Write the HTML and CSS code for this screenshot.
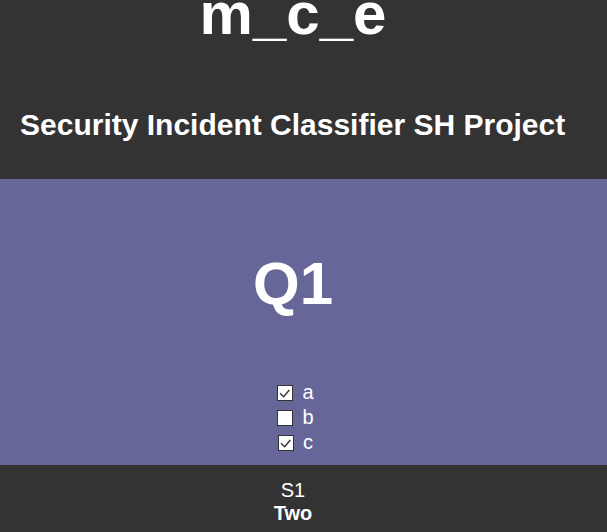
FILE: index.html
```html
<!DOCTYPE html>
<html>
<head>
<meta charset="utf-8">
<title>m_c_e</title>
<link rel="stylesheet" href="styles.css">
</head>
<body>
<header class="top">
  <h1 class="brand">m_c_e</h1>
  <h2 class="title">Security Incident Classifier SH Project</h2>
</header>
<main class="question">
  <h2 class="qname">Q1</h2>
  <div class="options">
    <div class="opt">
      <span class="box"><svg viewBox="0 0 16 16" width="16" height="16"><path d="M3 8.3 L6.7 11.7 L12.3 5" fill="none" stroke="#333" stroke-width="1.4"/></svg></span>
      <span class="lbl">a</span>
    </div>
    <div class="opt">
      <span class="box"></span>
      <span class="lbl">b</span>
    </div>
    <div class="opt">
      <span class="box"><svg viewBox="0 0 16 16" width="16" height="16"><path d="M3 8.3 L6.7 11.7 L12.3 5" fill="none" stroke="#333" stroke-width="1.4"/></svg></span>
      <span class="lbl">c</span>
    </div>
  </div>
</main>
<footer class="foot">
  <div class="sec">S1</div>
  <div class="sub">Two</div>
</footer>
</body>
</html>
```
FILE: styles.css
```css
html, body {
  margin: 0;
  padding: 0;
  background: #333333;
}
body {
  font-family: "Liberation Sans", Arial, sans-serif;
  color: #ffffff;
  overflow: hidden;
}
.top {
  background: #333333;
  height: 179px;
  overflow: hidden;
}
.brand {
  margin: -16px 0 0 0;
  padding-right: 21px;
  font-size: 60px;
  line-height: 60px;
  font-weight: bold;
  text-align: center;
}
.title {
  margin: 63px 0 0 0;
  padding-left: 20px;
  font-size: 30px;
  line-height: 36px;
  font-weight: bold;
}
.question {
  background: #666699;
  height: 286px;
  box-sizing: border-box;
  padding-top: 69px;
  overflow: hidden;
}
.qname {
  margin: 0;
  padding-right: 21px;
  font-size: 60px;
  line-height: 72px;
  font-weight: bold;
  text-align: center;
}
.options {
  margin-top: 60px;
  display: flex;
  flex-direction: column;
}
.opt {
  display: flex;
  justify-content: center;
  align-items: center;
  height: 25px;
  padding-right: 21px;
  font-size: 20px;
}
.box {
  display: block;
  width: 16px;
  height: 16px;
  box-sizing: border-box;
  border: 1px solid #333333;
  background: #ffffff;
  margin: 0 9px 0 5px;
  position: relative;
}
.box svg {
  position: absolute;
  left: -1px;
  top: -1px;
}
.lbl {
  line-height: 25px;
}
.foot {
  background: #333333;
  padding-top: 14px;
  padding-right: 21px;
  text-align: center;
  font-size: 20px;
  line-height: 23px;
  height: 67px;
  box-sizing: border-box;
}
.sub {
  font-weight: bold;
}
```
